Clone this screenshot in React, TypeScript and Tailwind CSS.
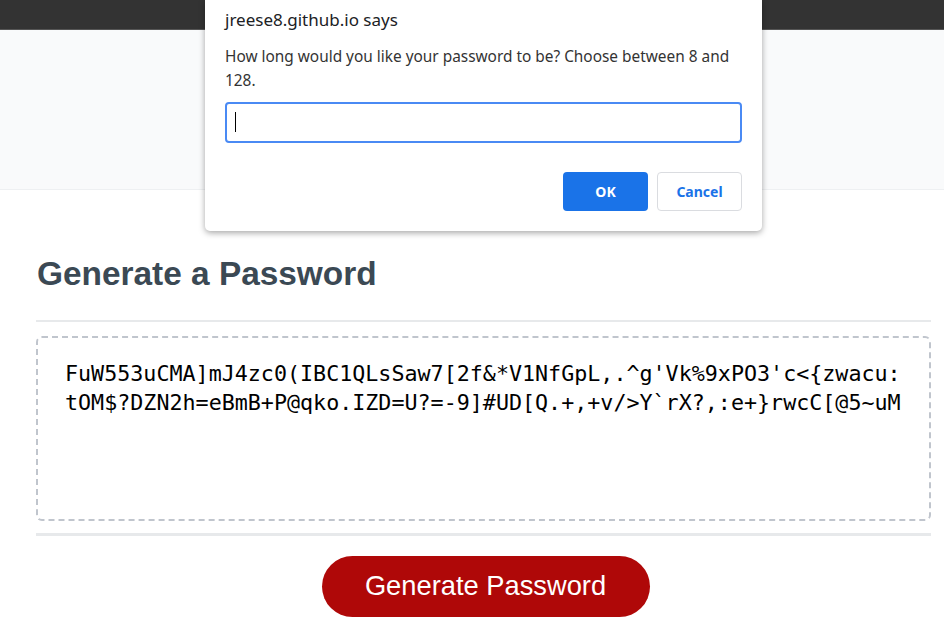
import { useState } from "react";

const passwordLines = [
  "FuW553uCMA]mJ4zc0(IBC1QLsSaw7[2f&*V1NfGpL,.^g'Vk%9xPO3'c<{zwacu:",
  "tOM$?DZN2h=eBmB+P@qko.IZD=U?=-9]#UD[Q.+,+v/>Y`rX?,:e+}rwcC[@5~uM",
];

const PromptDialog = () => {
  const [value, setValue] = useState("");

  return (
    <div className="absolute left-[205px] top-0 w-[557px] h-[231px] bg-white rounded-b-[5px] shadow-[0_2px_6px_rgba(0,0,0,0.35)] px-[20px] font-['Noto_Sans',sans-serif] text-[#202124]">
      <div className="pt-[7px] text-[17px] leading-[26px]">jreese8.github.io says</div>
      <p className="mt-[12px] text-[15.4px] leading-[23.5px] text-[#333]">
        How long would you like your password to be? Choose between 8 and 128.
      </p>
      <div className="relative mt-[10px] h-[41px] rounded-[4px] border-2 border-[#4a8af4]">
        <input
          className="w-full h-full px-[8px] outline-none bg-transparent text-[14px]"
          value={value}
          onChange={(e) => setValue(e.target.value)}
        />
        {/* caret */}
        <span className="absolute left-[8px] top-[8px] w-px h-[20px] bg-black" />
      </div>
      <div className="flex justify-end gap-[9px] mt-[29px]">
        <button className="w-[85px] h-[39px] rounded-[4px] bg-[#1a73e8] text-white text-[14px] font-bold">
          OK
        </button>
        <button className="w-[85px] h-[39px] rounded-[4px] bg-white border border-[#dadce0] text-[#1a73e8] text-[14px] font-bold">
          Cancel
        </button>
      </div>
    </div>
  );
};

export default function App() {
  return (
    <div className="relative w-full min-h-[639px] bg-white font-['Liberation_Sans',Arial,sans-serif] overflow-hidden">
      {/* top bar */}
      <div className="h-[30px] bg-[#333333] border-b border-[#555]" />
      {/* header band */}
      <div className="h-[160px] bg-[#f9fafb] border-b border-[#eef0f2]" />

      {/* card */}
      <div className="pl-[36px] pr-[13px] text-[#3b4954]">
        <h2 className="mt-[64px] text-[33.4px] leading-[40px] font-bold pl-px">Generate a Password</h2>
        <div className="mt-[26px] h-[2px] bg-[#e7e9eb]" />

        <div className="mt-[14px] h-[185px] rounded-[6px] border-2 border-dashed border-[#c0c5cd] pl-[27px] pt-[22px]">
          {passwordLines.map((line) => (
            <div
              key={line}
              className="font-['DejaVu_Sans_Mono',monospace] text-[21.7px] leading-[28.5px] text-black whitespace-pre"
            >
              {line}
            </div>
          ))}
        </div>

        <div className="mt-[12px] h-[3px] bg-[#e7e9eb]" />

        <div className="flex justify-center pt-[20px] pl-[4px]">
          <button className="w-[328px] h-[61px] rounded-full bg-[#af0808] text-white text-[27.3px]">
            Generate Password
          </button>
        </div>
      </div>

      <PromptDialog />
    </div>
  );
}
